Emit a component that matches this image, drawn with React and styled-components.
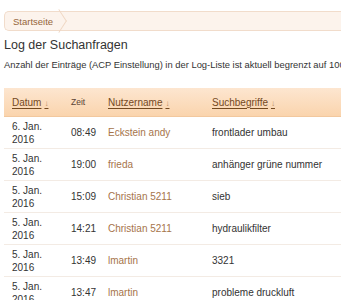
import React from "react";
import styled, { createGlobalStyle } from "styled-components";

const Global = createGlobalStyle`
  html, body { margin: 0; padding: 0; background: #fff; overflow: hidden; }
  body { font-family: "Liberation Sans", Arial, sans-serif; color: #2b2b2b; }
`;

const Page = styled.div`
  padding: 11px 0 0 4px;
  width: 420px;
`;

const Crumbs = styled.div`
  display: flex;
  align-items: center;
  height: 18px;
  background: #fcf3ec;
  border: 1px solid #f1dccb;
  border-right: none;
  border-radius: 5px 0 0 5px;
`;

const Crumb = styled.span`
  position: relative;
  display: flex;
  align-items: center;
  height: 100%;
  padding: 0 8px 0 8px;
  font-size: 9.5px;
  color: #96663a;
  &::after {
    content: "";
    position: absolute;
    right: -5px;
    top: 2px;
    width: 13px;
    height: 13px;
    border-top: 1px solid #efd6c2;
    border-right: 1px solid #efd6c2;
    transform: rotate(45deg) skew(12deg, 12deg);
  }
`;

const Title = styled.h1`
  margin: 7px 0 0;
  font-size: 12.5px;
  font-weight: normal;
  color: #333;
`;

const Desc = styled.p`
  margin: 7px 0 0;
  font-size: 9.4px;
  white-space: nowrap;
  color: #333;
`;

const Table = styled.div`
  margin-top: 18px;
  width: 400px;
`;

const Row = styled.div`
  display: grid;
  grid-template-columns: 67px 37px 104px 1fr;
  align-items: center;
  border-bottom: 1px solid #f3ebe4;
  height: 31px;
  font-size: 10px;
`;

const Head = styled(Row)`
  height: 28px;
  background: linear-gradient(#fde6d0, #fad4ad);
  border-bottom: 1px solid #f2c89e;
`;

const HCell = styled.span`
  padding-left: ${(p) => (p.$first ? 8 : 0)}px;
  font-size: ${(p) => (p.$small ? "8.5px" : "10px")};
  color: ${(p) => (p.$small ? "#5a4434" : "#74491f")};
  text-decoration: ${(p) => (p.$small ? "none" : "underline")};
  text-underline-offset: 2px;
`;

const Arrow = styled.span`
  color: #b58a62;
  font-size: 8px;
  margin-left: 3px;
`;

const DateCell = styled.span`
  padding-left: 8px;
  line-height: 13px;
  color: #333;
`;

const Cell = styled.span`
  color: ${(p) => (p.$user ? "#a6744a" : "#333")};
`;

const rows = [
  ["6. Jan.", "08:49", "Eckstein andy", "frontlader umbau"],
  ["5. Jan.", "19:00", "frieda", "anhänger grüne nummer"],
  ["5. Jan.", "15:09", "Christian 5211", "sieb"],
  ["5. Jan.", "14:21", "Christian 5211", "hydraulikfilter"],
  ["5. Jan.", "13:49", "lmartin", "3321"],
  ["5. Jan.", "13:47", "lmartin", "probleme druckluft"],
];

export default function App() {
  return (
    <Page>
      <Global />
      <Crumbs>
        <Crumb>Startseite</Crumb>
      </Crumbs>
      <Title>Log der Suchanfragen</Title>
      <Desc>Anzahl der Einträge (ACP Einstellung) in der Log-Liste ist aktuell begrenzt auf 100.</Desc>
      <Table>
        <Head>
          <HCell $first>Datum<Arrow>↓</Arrow></HCell>
          <HCell $small>Zeit</HCell>
          <HCell>Nutzername<Arrow>↓</Arrow></HCell>
          <HCell>Suchbegriffe<Arrow>↓</Arrow></HCell>
        </Head>
        {rows.map((r, i) => (
          <Row key={i}>
            <DateCell>{r[0]}<br />2016</DateCell>
            <Cell>{r[1]}</Cell>
            <Cell $user>{r[2]}</Cell>
            <Cell>{r[3]}</Cell>
          </Row>
        ))}
      </Table>
    </Page>
  );
}
